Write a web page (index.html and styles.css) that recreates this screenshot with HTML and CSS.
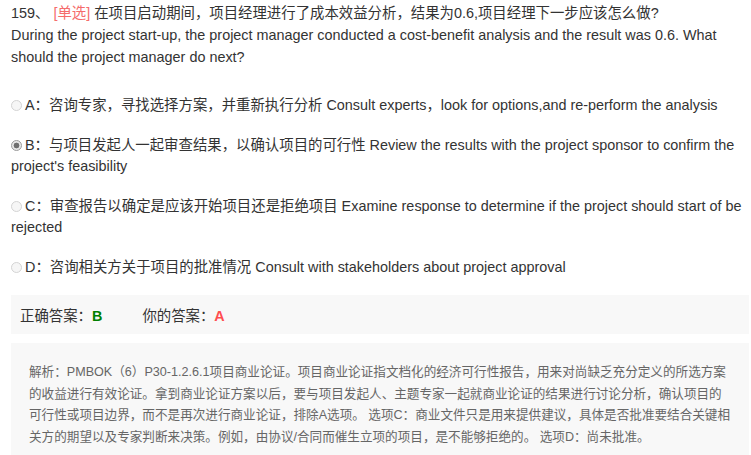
FILE: index.html
```html
<!DOCTYPE html>
<html lang="zh">
<head>
<meta charset="utf-8">
<title>Question 159</title>
<link rel="stylesheet" href="styles.css">
</head>
<body>
<div class="page">
  <div class="question">159、 <span class="type">[单选]</span> 在项目启动期间，项目经理进行了成本效益分析，结果为0.6,项目经理下一步应该怎么做?<br>During the project start-up, the project manager conducted a cost-benefit analysis and the result was 0.6. What should the project manager do next?</div>
  <div class="options">
    <div class="option"><span class="radio"></span>A：咨询专家，寻找选择方案，并重新执行分析 Consult experts，look for options,and re-perform the analysis</div>
    <div class="option"><span class="radio checked"></span>B：与项目发起人一起审查结果，以确认项目的可行性 Review the results with the project sponsor to confirm the project's feasibility</div>
    <div class="option"><span class="radio"></span>C：审查报告以确定是应该开始项目还是拒绝项目 Examine response to determine if the project should start of be rejected</div>
    <div class="option"><span class="radio"></span>D：咨询相关方关于项目的批准情况 Consult with stakeholders about project approval</div>
  </div>
  <div class="answer">
    <span class="ans-item">正确答案：<b class="right">B</b></span>
    <span class="ans-item">你的答案：<b class="wrong">A</b></span>
  </div>
  <div class="analysis">解析：PMBOK（6）P30-1.2.6.1项目商业论证。项目商业论证指文档化的经济可行性报告，用来对尚缺乏充分定义的所选方案的收益进行有效论证。拿到商业论证方案以后，要与项目发起人、主题专家一起就商业论证的结果进行讨论分析，确认项目的可行性或项目边界，而不是再次进行商业论证，排除A选项。 选项C：商业文件只是用来提供建议，具体是否批准要结合关键相关方的期望以及专家判断来决策。例如，由协议/合同而催生立项的项目，是不能够拒绝的。 选项D：尚未批准。</div>
</div>
</body>
</html>
```
FILE: styles.css
```css
html, body {
  margin: 0;
  padding: 0;
  background: #fff;
}
body {
  font-family: "Liberation Sans", Arial, "Noto Sans CJK SC", sans-serif;
  font-size: 14.4px;
  color: #333;
}
.page {
  width: 738px;
  margin-left: 11px;
  padding-top: 2px;
}
.question {
  line-height: 22px;
}
.type {
  color: #f56c6c;
}
.options {
  margin-top: 27px;
  display: flex;
  flex-direction: column;
  gap: 19px;
}
.option {
  line-height: 21px;
}
.radio {
  display: inline-block;
  box-sizing: border-box;
  width: 11px;
  height: 11px;
  border: 1px solid #d4d4d4;
  border-radius: 50%;
  background: #f6f6f6;
  margin-right: 3px;
  vertical-align: -1px;
}
.radio.checked {
  border-color: #9a9a9a;
  background: radial-gradient(circle, #6f6f6f 0 2.6px, #e8e8e8 3.2px);
}
.answer {
  margin-top: 17px;
  background: #f8f8f8;
  height: 39px;
  display: flex;
  align-items: center;
  gap: 40px;
  padding-left: 9px;
}
.ans-item b {
  font-weight: bold;
}
.right {
  color: #008000;
}
.wrong {
  color: #ff4d4f;
}
.analysis {
  margin-top: 9px;
  background: #f8f8f8;
  padding: 19px 18px 16px 18px;
  font-size: 12.6px;
  line-height: 21.7px;
  color: #666;
}
```
